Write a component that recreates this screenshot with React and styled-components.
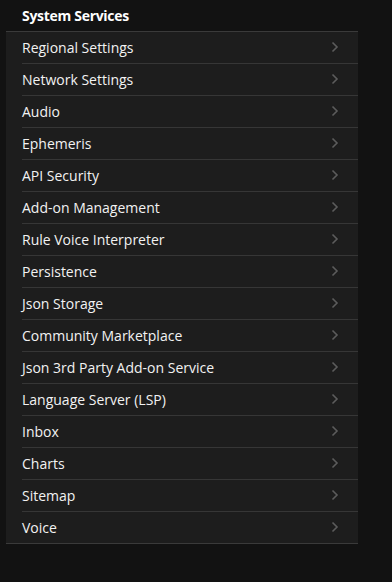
import styled, { createGlobalStyle } from "styled-components";

const GlobalStyle = createGlobalStyle`
  html, body {
    margin: 0;
    padding: 0;
    background: #121212;
  }
  body {
    font-family: "Open Sans", "DejaVu Sans", sans-serif;
    color: #f2f2f2;
  }
`;

const services = [
  "Regional Settings",
  "Network Settings",
  "Audio",
  "Ephemeris",
  "API Security",
  "Add-on Management",
  "Rule Voice Interpreter",
  "Persistence",
  "Json Storage",
  "Community Marketplace",
  "Json 3rd Party Add-on Service",
  "Language Server (LSP)",
  "Inbox",
  "Charts",
  "Sitemap",
  "Voice",
];

const Chevron = () => (
  <svg width="8" height="12" viewBox="0 0 8 12" fill="none">
    <path d="M1.5 1.5 L6 6 L1.5 10.5" stroke="#5c5c5c" strokeWidth="1.6" />
  </svg>
);

const App = () => {
  return (
    <Page>
      <GlobalStyle />
      <Title>System Services</Title>
      <List>
        {services.map((name) => (
          <Row key={name}>
            <Label>{name}</Label>
            <Chevron />
          </Row>
        ))}
      </List>
    </Page>
  );
};

export default App;

const Page = styled.div`
  width: 392px;
  height: 582px;
  padding: 0 0 0 6px;
  box-sizing: border-box;
`;

const Title = styled.h3`
  margin: 0;
  height: 31px;
  padding-left: 16px;
  display: flex;
  align-items: center;
  font-size: 14px;
  font-weight: 700;
  letter-spacing: -0.3px;
  color: #ffffff;
`;

const List = styled.ul`
  list-style: none;
  margin: 0;
  padding: 0 0 0 16px;
  width: 352px;
  box-sizing: border-box;
  background: #1d1d1d;
  border-top: 1px solid #3a3a3a;
  border-bottom: 1px solid #3a3a3a;
`;

const Row = styled.li`
  height: 32px;
  display: flex;
  align-items: center;
  justify-content: space-between;
  padding-right: 19px;
  padding-bottom: 1px;
  box-sizing: border-box;
  border-bottom: 1px solid #363636;

  &:last-child {
    border-bottom: none;
    height: 31px;
  }
`;

const Label = styled.span`
  font-size: 14px;
  color: #f2f2f2;
`;
